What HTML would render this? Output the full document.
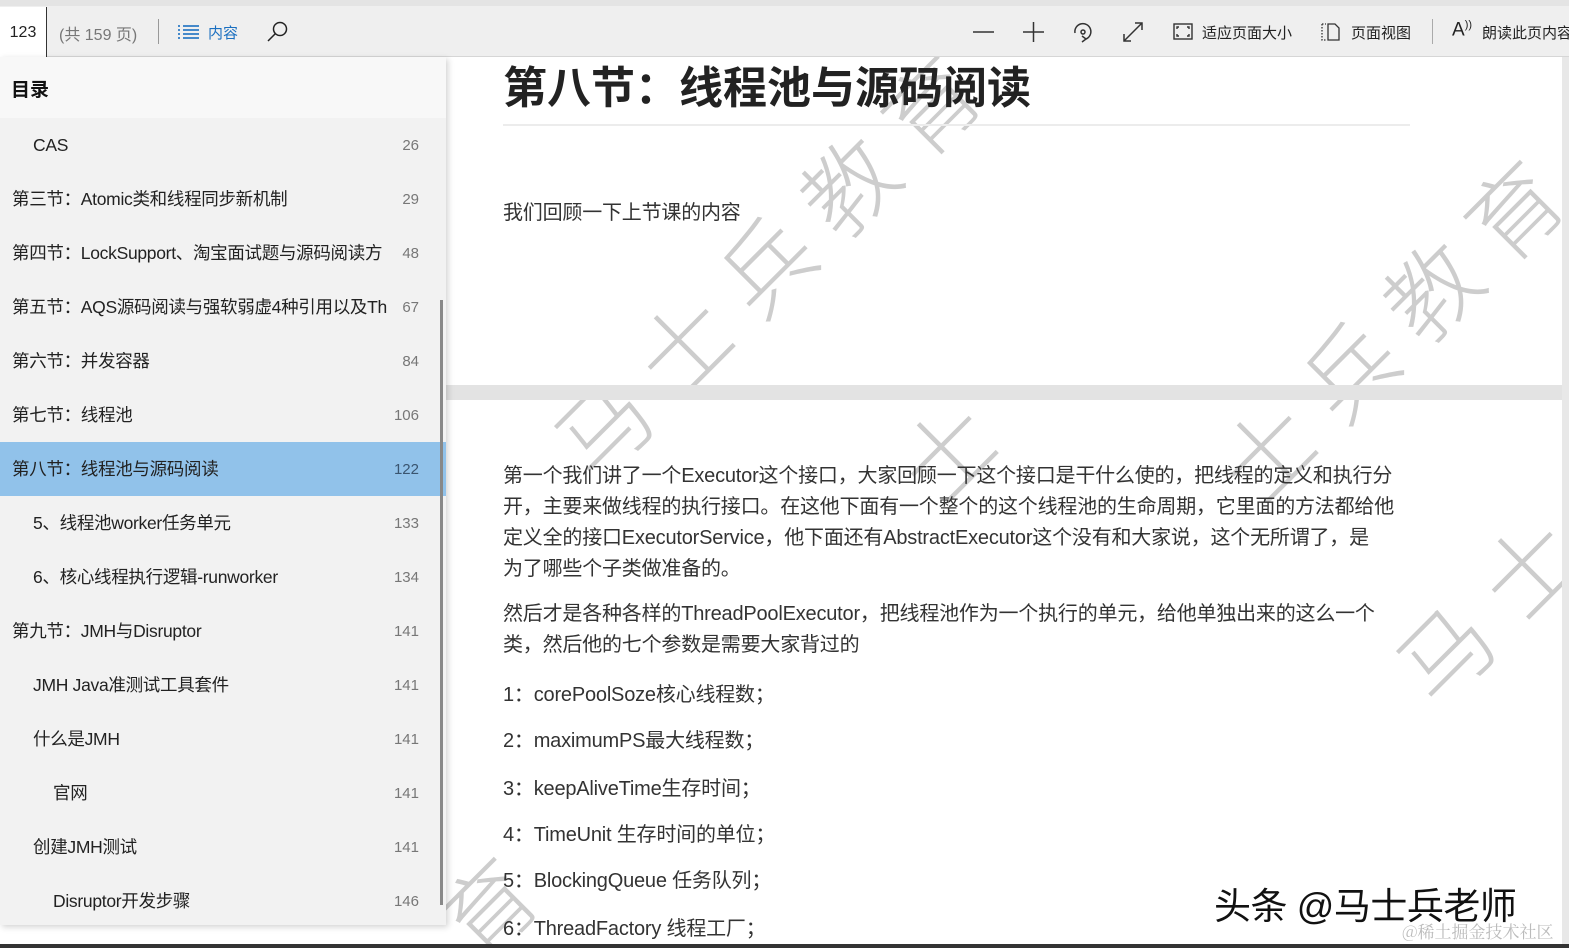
<!DOCTYPE html>
<html><head><meta charset="utf-8"><style>
*{margin:0;padding:0;box-sizing:border-box}
html{width:1569px;height:948px;overflow:hidden}
body{width:1569px;height:948px;overflow:hidden;background:#fff;font-family:"Liberation Sans","Noto Sans CJK SC",sans-serif;position:relative;color:#222}
.tb{position:absolute;left:0;top:0;width:1569px;height:57px;background:#efefef;border-top:6px solid #e4e4e4;border-bottom:1px solid #d6d6d6}
.pg{position:absolute;left:0;top:7px;width:47px;height:50px;background:#fff;border-right:1px solid #333;font-size:16px;line-height:52px;text-align:center;color:#222}
.t{position:absolute;font-size:15px;color:#222;white-space:nowrap}
.side{position:absolute;left:0;top:57px;width:446px;height:868px;background:#f2f2f2;box-shadow:2px 2px 6px rgba(0,0,0,.18);overflow:hidden}
.sh{height:61px;background:#f8f8f8;font-weight:bold;font-size:19px;line-height:68px;padding-left:11px;color:#111}
.row{height:54px;position:relative;font-size:17.5px;line-height:54px;color:#222;white-space:nowrap;letter-spacing:-0.3px}
.row span{position:absolute;right:27px;top:1px;font-size:15px;color:#777;letter-spacing:0}
.row.sel{background:#91c2ea}
.row.sel span{color:#3a5570}
.w{position:absolute;width:100px;height:100px;margin:-50px 0 0 -50px;line-height:100px;text-align:center;color:#cdcdcd;font-size:92px;transform:rotate(-45deg);font-family:"Noto Sans CJK SC",sans-serif;font-weight:300}
.p{position:absolute;left:503px;font-size:20px;color:#333;white-space:nowrap;letter-spacing:-0.2px}
</style></head><body>
<div class="w" style="left:600px;top:425px">马</div>
<div class="w" style="left:682px;top:343px">士</div>
<div class="w" style="left:764px;top:263px">兵</div>
<div class="w" style="left:846px;top:183px">教</div>
<div class="w" style="left:928px;top:103px">育</div>
<div class="w" style="left:1265px;top:450px">士</div>
<div class="w" style="left:1347px;top:368px">兵</div>
<div class="w" style="left:1429px;top:288px">教</div>
<div class="w" style="left:1511px;top:208px">育</div>
<div class="w" style="left:1442px;top:650px">马</div>
<div class="w" style="left:1526px;top:566px">士</div>
<div class="w" style="left:945px;top:450px">士</div>
<div class="w" style="left:485px;top:905px">育</div>

<div style="position:absolute;left:446px;top:385px;width:1123px;height:15px;background:#e3e3e3"></div>
<div style="position:absolute;left:503px;top:58px;font-size:44px;font-weight:bold;color:#222;font-family:'Noto Sans CJK SC',sans-serif;line-height:52px;white-space:nowrap">第八节：线程池与源码阅读</div>
<div style="position:absolute;left:503px;top:124px;width:907px;height:2px;background:#ececec"></div>
<div class="p" style="top:196px">我们回顾一下上节课的内容</div>
<div class="p" style="top:461px;line-height:31px">第一个我们讲了一个Executor这个接口，大家回顾一下这个接口是干什么使的，把线程的定义和执行分<br>开，主要来做线程的执行接口。在这他下面有一个整个的这个线程池的生命周期，它里面的方法都给他<br>定义全的接口ExecutorService，他下面还有AbstractExecutor这个没有和大家说，这个无所谓了，是<br>为了哪些个子类做准备的。</div>
<div class="p" style="top:599px;line-height:31px">然后才是各种各样的ThreadPoolExecutor，把线程池作为一个执行的单元，给他单独出来的这么一个<br>类，然后他的七个参数是需要大家背过的</div>
<div class="p" style="top:678px">1：corePoolSoze核心线程数；</div>
<div class="p" style="top:724px">2：maximumPS最大线程数；</div>
<div class="p" style="top:772px">3：keepAliveTime生存时间；</div>
<div class="p" style="top:818px">4：TimeUnit 生存时间的单位；</div>
<div class="p" style="top:864px">5：BlockingQueue 任务队列；</div>
<div class="p" style="top:912px">6：ThreadFactory 线程工厂；</div>
<div style="position:absolute;left:1214px;top:876px;font-size:37px;color:#111;white-space:nowrap;letter-spacing:-0.5px">头条 @马士兵老师</div>
<div style="position:absolute;left:1402px;top:918px;font-size:17px;color:#bbb;font-family:'Noto Serif CJK SC',serif;white-space:nowrap">@稀土掘金技术社区</div>
<div style="position:absolute;left:1562px;top:57px;width:7px;height:887px;background:#e8e8e8"></div>

<div class="tb"></div>
<div class="pg">123</div>
<div class="t" style="left:59px;top:21px;color:#777;font-size:16px">(共 159 页)</div>
<div style="position:absolute;left:158px;top:19px;width:1px;height:25px;background:#999"></div>
<svg style="position:absolute;left:178px;top:25px" width="22" height="14"><g stroke="#1a6fc0" stroke-width="1.6"><line x1="0" y1="1" x2="2" y2="1"/><line x1="5" y1="1" x2="21" y2="1"/><line x1="0" y1="5" x2="2" y2="5"/><line x1="5" y1="5" x2="21" y2="5"/><line x1="0" y1="9" x2="2" y2="9"/><line x1="5" y1="9" x2="21" y2="9"/><line x1="0" y1="13" x2="2" y2="13"/><line x1="5" y1="13" x2="21" y2="13"/></g></svg>
<div class="t" style="left:208px;top:22px;color:#1a6fc0">内容</div>
<svg style="position:absolute;left:266px;top:21px" width="24" height="22"><circle cx="14" cy="8" r="6.5" fill="none" stroke="#222" stroke-width="1.5"/><line x1="9.5" y1="12.5" x2="2" y2="20" stroke="#222" stroke-width="1.5"/></svg>
<svg style="position:absolute;left:972px;top:20px" width="180" height="24" fill="none" stroke="#333" stroke-width="1.5"><line x1="1" y1="12" x2="22" y2="12"/><line x1="51" y1="12" x2="72" y2="12"/><line x1="61.5" y1="2" x2="61.5" y2="22"/><path d="M103 13 A8 8 0 1 1 114 19"/><path d="M110 16 L114 19 L110 22"/><circle cx="111" cy="12" r="2"/><line x1="152" y1="21" x2="170" y2="3"/><path d="M152 14 V21 H159"/><path d="M163 3 H170 V10"/></svg>
<svg style="position:absolute;left:1173px;top:23px" width="20" height="17" fill="none" stroke="#333" stroke-width="1.4"><rect x="1" y="1" width="18" height="15"/><path d="M4 6V4H6M14 4H16V6M16 11V13H14M6 13H4V11"/></svg>
<div class="t" style="left:1202px;top:22px">适应页面大小</div>
<svg style="position:absolute;left:1321px;top:23px" width="20" height="18" fill="none" stroke="#333" stroke-width="1.3"><path d="M1 1H5M1 1V17H5" stroke-dasharray="1.5 1.5"/><path d="M7 1H14L18 5V17H7Z"/></svg>
<div class="t" style="left:1351px;top:22px">页面视图</div>
<div style="position:absolute;left:1432px;top:19px;width:1px;height:25px;background:#aaa"></div>
<div class="t" style="left:1452px;top:19px;font-size:19px">A<sup style="font-size:11px">))</sup></div>
<div class="t" style="left:1482px;top:22px">朗读此页内容</div>

<div class="side">
<div class="sh">目录</div>
<div class="row" style="padding-left:33px">CAS<span>26</span></div>
<div class="row" style="padding-left:12px">第三节：Atomic类和线程同步新机制<span>29</span></div>
<div class="row" style="padding-left:12px">第四节：LockSupport、淘宝面试题与源码阅读方<span style="background:#f2f2f2;padding-left:8px">48</span></div>
<div class="row" style="padding-left:12px">第五节：AQS源码阅读与强软弱虚4种引用以及Th<span style="background:#f2f2f2;padding-left:8px">67</span></div>
<div class="row" style="padding-left:12px">第六节：并发容器<span>84</span></div>
<div class="row" style="padding-left:12px">第七节：线程池<span>106</span></div>
<div class="row sel" style="padding-left:12px">第八节：线程池与源码阅读<span>122</span></div>
<div class="row" style="padding-left:33px">5、线程池worker任务单元<span>133</span></div>
<div class="row" style="padding-left:33px">6、核心线程执行逻辑-runworker<span>134</span></div>
<div class="row" style="padding-left:12px">第九节：JMH与Disruptor<span>141</span></div>
<div class="row" style="padding-left:33px">JMH Java准测试工具套件<span>141</span></div>
<div class="row" style="padding-left:33px">什么是JMH<span>141</span></div>
<div class="row" style="padding-left:53px">官网<span>141</span></div>
<div class="row" style="padding-left:33px">创建JMH测试<span>141</span></div>
<div class="row" style="padding-left:53px">Disruptor开发步骤<span>146</span></div>
<div style="position:absolute;left:440px;top:243px;width:3px;height:605px;background:#888"></div>
</div>
<div style="position:absolute;left:0;top:944px;width:1569px;height:4px;background:#333"></div>
</body></html>
